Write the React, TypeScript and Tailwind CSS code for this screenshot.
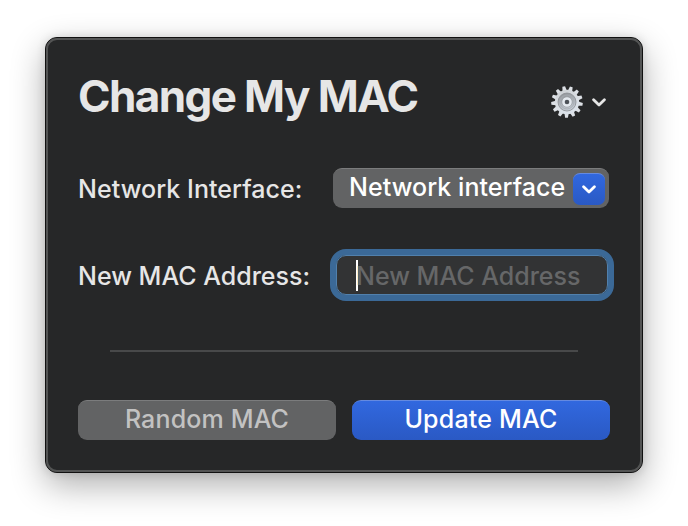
import React from "react";

function Chevron({ className }: { className: string }) {
  return (
    <svg className={className} viewBox="0 0 14 9" fill="none" stroke="currentColor" strokeWidth="2.8" strokeLinecap="round" strokeLinejoin="round">
      <path d="M1.6 1.7 L7 6.9 L12.4 1.7" />
    </svg>
  );
}

const TEETH = Array.from({ length: 13 }, (_, i) => (i * 360) / 13);

function Gear() {
  return (
    <svg className="h-8 w-8" viewBox="-16 -16 32 32">
      <defs>
        <linearGradient id="rim" x1="0" y1="0" x2="0.4" y2="1">
          <stop offset="0" stopColor="#c9cdd0" />
          <stop offset="0.5" stopColor="#d9dde2" />
          <stop offset="1" stopColor="#dbe2ea" />
        </linearGradient>
        <linearGradient id="dish" x1="0" y1="0" x2="0.3" y2="1">
          <stop offset="0" stopColor="#8b8e92" />
          <stop offset="1" stopColor="#c3cad2" />
        </linearGradient>
      </defs>
      {TEETH.map((a) => (
        <path key={a} d="M-2.2 -11 L-1.4 -15.8 H1.4 L2.2 -11 Z" fill="#dce0e5" transform={`rotate(${a - 12})`} />
      ))}
      <circle r="12.2" fill="url(#rim)" />
      <circle r="9" fill="url(#dish)" stroke="#898d92" strokeWidth="0.8" />
      <circle r="7" fill="none" stroke="#a6abb1" strokeWidth="0.8" />
      <circle r="5.2" fill="#e4e9ef" stroke="#8b9095" strokeWidth="0.6" />
      <circle r="2.3" fill="#4c5157" />
    </svg>
  );
}

export default function App() {
  return (
    <main className="h-[526px] w-[688px] overflow-hidden bg-white pt-[37px] pl-[45px] font-[Inter,sans-serif] text-[25px] font-[450] tracking-[0.05px] whitespace-nowrap text-[#e6e6e6]">
      <section className="flex h-[436px] w-[598px] flex-col rounded-[12px] border border-[#111] bg-[#262728] shadow-[0_12px_34px_rgba(0,0,0,0.32),0_0_10px_rgba(0,0,0,0.12)]">
        <div className="flex grow flex-col rounded-[11px] border-2 border-[#535454] pr-[30px] pl-[30px]">
          <header className="flex h-[128px] items-start justify-between">
            <h1 className="mt-[31px] text-[44px] leading-[50px] font-bold tracking-[-1.6px]">Change My MAC</h1>
            <button className="mt-[46px] mr-1 flex items-center gap-[9px]">
              <Gear />
              <Chevron className="h-[9px] w-[14px]" />
            </button>
          </header>
          <div className="flex h-10 justify-between">
            <label className="leading-[42px]">Network Interface:</label>
            <div className="mr-px flex w-[276px] items-center justify-between rounded-[9px] border-t border-[#7b7c7d] bg-[#626364] pr-1 pl-4 text-white">
              <span className="pb-1 leading-[34px]">Network interface</span>
              <span className="flex h-8 w-8 items-center justify-center rounded-[7px] border-t border-[#658ae0] bg-linear-to-b from-[#3168df] to-[#2a59c4]">
                <Chevron className="h-[9px] w-[14px]" />
              </span>
            </div>
          </div>
          <div className="mt-[41px] flex h-[52px] items-center justify-between">
            <label className="pt-0.5 leading-[52px] tracking-normal">New MAC Address:</label>
            <div className="-mr-1 flex h-[52px] w-[284px] items-center rounded-[16px] border-[6px] border-[#3b6997] bg-[#323334]">
              <div className="flex h-full w-full items-center rounded-[10px] border border-[#5180ac] pl-[19px]">
                <span className="h-[31px] w-0.5 bg-white" />
                <span className="-ml-0.5 pt-[3px] tracking-normal text-[#666768]">New MAC Address</span>
              </div>
            </div>
          </div>
          <hr className="mx-8 mt-[49px] border-t-2 border-[#48494a]" />
          <div className="mt-12 flex gap-4">
            <button className="h-10 w-[258px] rounded-[9px] border-t border-[#7b7c7d] bg-[#626364] pb-1 leading-[34px] tracking-[0.15px] text-[#c2c2c2]">Random MAC</button>
            <button className="h-10 w-[258px] rounded-[9px] border-t border-[#658ae0] bg-linear-to-b from-[#3168df] to-[#2a59c4] pb-1 leading-[34px] tracking-[0.2px] text-white">Update MAC</button>
          </div>
        </div>
      </section>
    </main>
  );
}
